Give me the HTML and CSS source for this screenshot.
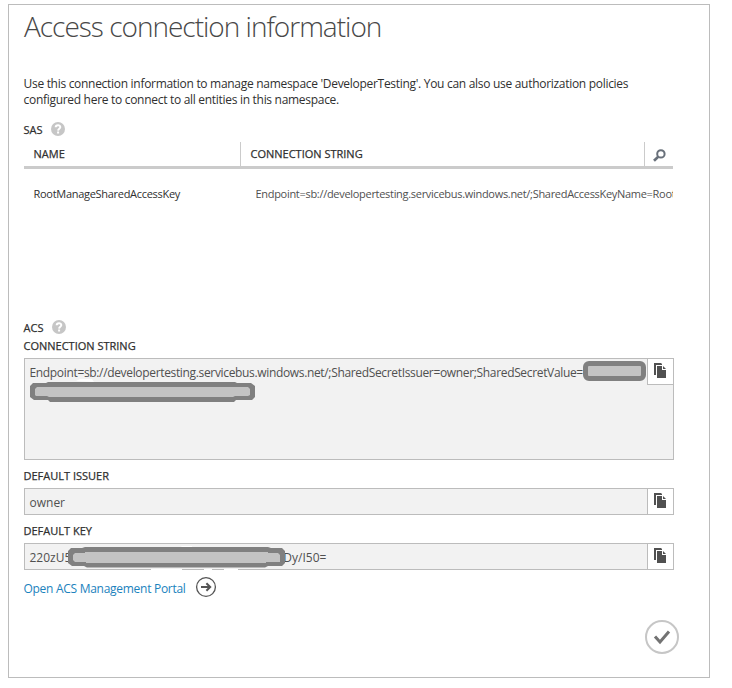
FILE: index.html
```html
<!DOCTYPE html>
<html lang="en">
<head>
<meta charset="utf-8">
<title>Access connection information</title>
<link rel="stylesheet" href="styles.css">
</head>
<body>
<svg class="defs" width="0" height="0">
  <symbol id="help" viewBox="0 0 14 14"><circle cx="7" cy="7" r="7" fill="#c6c6c6"/><path d="M4.7 5.3C4.7 2.6 9.4 2.6 9.3 5.2C9.2 6.7 7.2 6.7 7.1 8.6M7.1 9.6V11.5" fill="none" stroke="#fff" stroke-width="2"/></symbol>
  <symbol id="copy" viewBox="0 0 12 15"><path d="M0 0H7L8 1V2H2V12H0Z" fill="#505050"/><path d="M3 3H8V7H12V15H3Z" fill="#505050"/><path d="M9 3L12 6H9Z" fill="#505050"/></symbol>
</svg>
<main class="dialog">
  <h1 class="title">Access connection information</h1>
  <p class="intro">Use this connection information to manage namespace 'DeveloperTesting'. You can also use authorization policies<br>configured here to connect to all entities in this namespace.</p>
  <section class="sas">
    <h2 class="group"><span>SAS</span><svg class="help" width="14" height="14"><use href="#help"/></svg></h2>
    <div class="grid head">
      <div class="name"><span class="label">NAME</span></div>
      <div class="conn"><span class="label">CONNECTION STRING</span></div>
      <div class="search"><svg width="13" height="13" viewBox="0 0 13 13" fill="none" stroke="#68707a"><circle cx="7.9" cy="4.9" r="3.7" stroke-width="2"/><path d="M5.2 7.7L1 11.8" stroke-width="2.6"/></svg></div>
    </div>
    <div class="grid row">
      <div class="key">RootManageSharedAccessKey</div>
      <div class="value">Endpoint=sb://developertesting.servicebus.windows.net/;SharedAccessKeyName=Root</div>
    </div>
  </section>
  <section class="acs">
    <h2 class="group"><span>ACS</span><svg class="help" width="14" height="14"><use href="#help"/></svg></h2>
    <h3 class="field-label"><span class="label">CONNECTION STRING</span></h3>
    <div class="field tall">
      <div class="text endpoint">Endpoint=sb://developertesting.servicebus.windows.net/;SharedSecretIssuer=owner;SharedSecretValue=</div>
      <button class="copy" aria-label="Copy"><svg width="12" height="15"><use href="#copy"/></svg></button>
      <i class="mask first"></i>
      <svg class="stroke second" width="225" height="23" viewBox="0 0 225 23"><path d="M46 0L50-2H62L64 1Z" fill="#fff"/><path d="M3 2H16L18 1H205L207 2H221L225 5V16L222 19H206L204 21H20L18 19H4L0 16V5Z" fill="#808080"/><path d="M7 6H218L220 8V14L218 15H205L203 16H19L17 15H6L5 14V8Z" fill="#c3c3c3"/></svg>
    </div>
    <h3 class="field-label"><span class="label">DEFAULT ISSUER</span></h3>
    <div class="field">
      <div class="text">owner</div>
      <button class="copy" aria-label="Copy"><svg width="12" height="15"><use href="#copy"/></svg></button>
    </div>
    <h3 class="field-label"><span class="label">DEFAULT KEY</span></h3>
    <div class="field">
      <div class="text"><span>220zU5</span><span class="tail">Dy/I50=</span></div>
      <button class="copy" aria-label="Copy"><svg width="12" height="15"><use href="#copy"/></svg></button>
      <svg class="stroke third" width="217" height="26" viewBox="0 0 217 26"><path d="M111 3L114 1H124V3ZM83 24H114V26H83ZM136 24H144V26H136ZM156 24H170V26H156Z" fill="#fff"/><path d="M3 3H14L17 2H200L203 3H214L217 6V18L214 21H200L197 22.5H19L16 21H4L0 18V6Z" fill="#808080"/><path d="M7 8H17V7H200V8H210L212 10V17H198V18H18V17H7L5 15V10Z" fill="#c3c3c3"/></svg>
    </div>
    <a class="portal"><span>Open ACS Management Portal</span><svg width="22" height="22" viewBox="0 0 22 22" fill="none" stroke="#555"><circle cx="11" cy="11" r="9.4" stroke-width="1.3"/><path d="M6 11H15M11.4 7.2L15.2 11L11.4 14.8" stroke-width="2"/></svg></a>
  </section>
  <footer class="actions"><svg width="34" height="34" viewBox="0 0 34 34" fill="none"><circle cx="17" cy="17" r="16" stroke="#c6c6c6" stroke-width="2"/><path d="M10 16.5L15 22L24 11.5" stroke="#737373" stroke-width="3"/></svg></footer>
</main>
</body>
</html>
```
FILE: styles.css
```css
* { box-sizing: border-box; }
body { margin: 0; background: #fff; color: #303030; font: 12px/16px "Open Sans", "Noto Sans", sans-serif; }
.defs { position: absolute; }
h1, h2, h3, p { margin: 0; font-weight: 400; }
.dialog { width: 702px; height: 674px; margin: 4px 0 0 8px; padding: 0 30px 0 15px; border: 1px solid #bcbcbc; }
.title { height: 71px; font-size: 28px; line-height: 43px; font-weight: 300; letter-spacing: -1px; color: #484848; white-space: nowrap; }
.intro { height: 44px; margin-left: -.5px; letter-spacing: -.295px; white-space: nowrap; }
.group { display: flex; align-items: center; height: 20px; margin-left: -.5px; font-size: 11px; -webkit-text-stroke: .25px; }
.help { position: relative; top: -1px; margin-left: 8px; }
.label { font-size: 11px; -webkit-text-stroke: .25px; }
.grid { display: grid; grid-template-columns: 217px 404px 28px; width: 649px; }
.head { height: 27px; margin-top: 2px; border-bottom: 3px solid #cbcbcb; line-height: 24px; }
.name { padding-left: 9.5px; border-right: 1px solid #cbcbcb; }
.conn { padding-left: 9.5px; border-right: 1px solid #cbcbcb; }
.search { padding: 7px 0 0 8px; line-height: 0; }
.row { height: 149px; padding-top: 15px; grid-template-columns: 231.5px 417.5px; font-size: 11px; line-height: 20px; letter-spacing: -.29px; white-space: nowrap; }
.key { padding-left: 9.5px; }
.value { overflow: hidden; color: #505050; letter-spacing: -.3px; }
.acs .help { margin-left: 8.5px; }
.field-label { height: 20px; margin-left: -.5px; line-height: 14px; }
.acs .group + .field-label { line-height: 13px; }
.field { position: relative; display: flex; width: 650px; height: 27px; margin-bottom: 8px; border: 1px solid #bcbcbc; background: #f2f2f2; }
.tall { height: 102px; }
.text { flex: 1; padding-left: 4.5px; line-height: 27px; color: #505050; white-space: nowrap; }
.endpoint { letter-spacing: -.34px; }
.copy { flex: none; width: 26px; height: 25px; padding: 4px 0 0 6px; border: 0; border-left: 1px solid #bcbcbc; background: #fff; line-height: 0; text-align: left; display: flex; align-items: flex-start; }
.tall .copy { height: 26px; border-bottom: 1px solid #bcbcbc; }
.mask { position: absolute; border: 5px solid #808080; border-radius: 6px; background: #c3c3c3; }
.stroke { position: absolute; overflow: visible; }
.first { left: 558px; top: 2px; width: 63px; height: 20px; }
.second { left: 5px; top: 22px; }
.third { left: 43px; top: 1px; }
.tail { margin-left: 212px; }
.portal { display: flex; align-items: center; margin-left: -.5px; color: #1b82bd; letter-spacing: -.28px; }
.portal span { padding-top: 2px; }
.portal svg { margin: -2px 0 0 9px; }
.actions { display: flex; justify-content: flex-end; margin-top: 22px; }
```
